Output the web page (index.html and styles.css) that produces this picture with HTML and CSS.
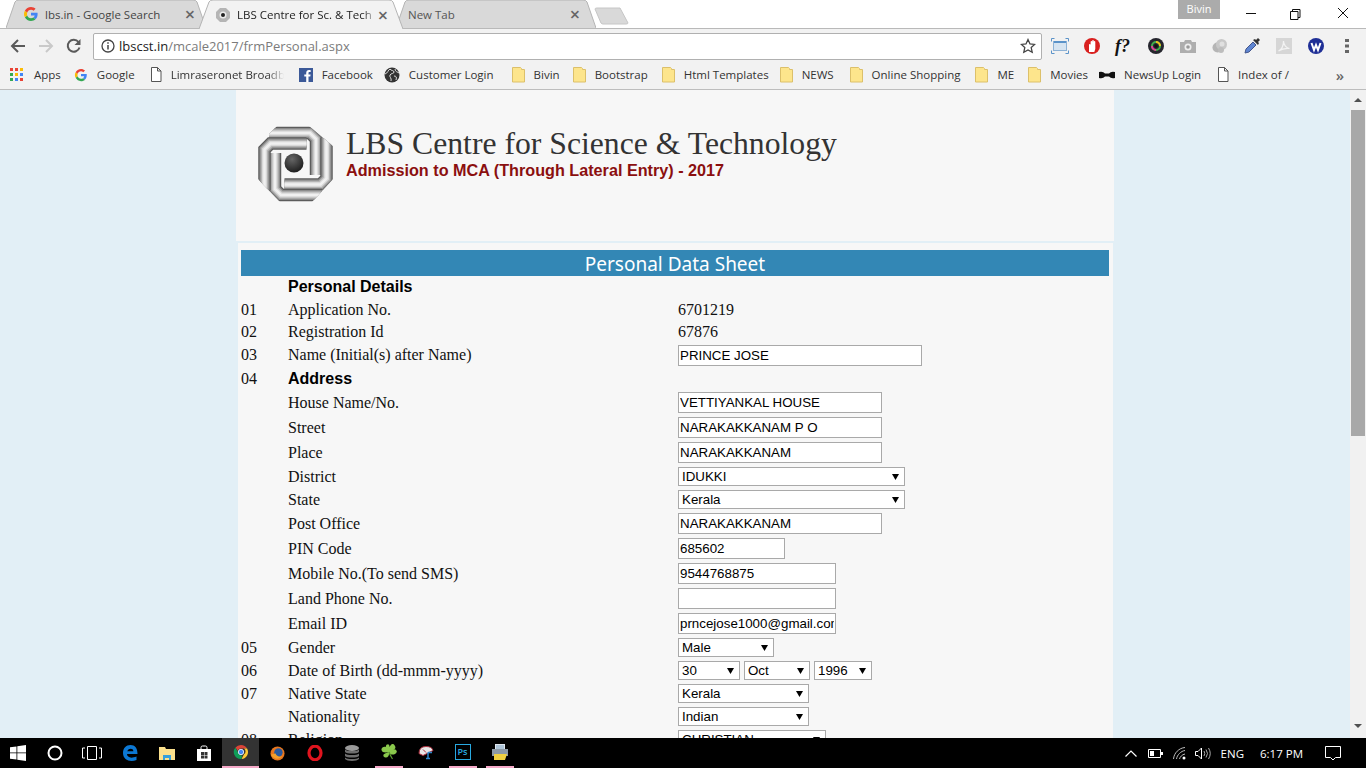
FILE: index.html
```html
<!DOCTYPE html>
<html lang="en">
<head>
  <meta charset="UTF-8">
  <title>LBS Centre for Sc. &amp; Tech</title>
  <link rel="stylesheet" href="styles.css">
</head>
<body>
  <svg class="defs" width="0" height="0">
    <symbol id="g-logo" viewBox="0 0 16 16">
      <path d="M14.6 8.2c0-.5 0-1-.1-1.400H8v2.700h3.700c-.2.900-.7 1.600-1.400 2.100l2.200 1.700c1.300-1.200 2.100-3 2.100-5.100z" fill="#4285f4"/>
      <path d="M8 15c1.900 0 3.400-.6 4.500-1.700l-2.200-1.700c-.6.400-1.400.7-2.300.7-1.800 0-3.300-1.200-3.800-2.800L1.900 11.200C3 13.500 5.300 15 8 15z" fill="#34a853"/>
      <path d="M4.200 9.500C4 9 4 8.500 4 8s.1-1 .2-1.500L1.900 4.800C1.300 5.700 1 6.800 1 8s.3 2.300.9 3.200z" fill="#fbbc05"/>
      <path d="M8 3.800c1 0 1.900.3 2.600 1l2-2C11.400 1.700 9.900 1 8 1 5.300 1 3 2.500 1.900 4.800l2.300 1.700C4.700 5 6.200 3.800 8 3.800z" fill="#ea4335"/>
    </symbol>
    <symbol id="doc" viewBox="0 0 12 15">
      <path d="M1.500.5h6l3.500 3.500v10.500h-9.500zM7.500.5v3.500h3.500" fill="#fff" stroke="#555"/>
    </symbol>
    <symbol id="folder" viewBox="0 0 13 16">
      <path d="M.5.500h8l1 1v1h3v12.500h-12z" fill="#fde58c" stroke="#dcc06a"/>
    </symbol>
    <symbol id="chrome" viewBox="0 0 16 16">
      <path d="M8 1a7 7 0 0 1 6.100 3.500H8a3.500 3.500 0 0 0-3.300 2.300L2.500 3.500A7 7 0 0 1 8 1z" fill="#db4437"/>
      <path d="M14.100 4.500A7 7 0 0 1 8.500 15l2.500-4.700a3.500 3.500 0 0 0 0-5.800z" fill="#fcc934"/>
      <path d="M2.500 3.500l3.100 6.300A3.500 3.500 0 0 0 9 11.400L8.500 15A7 7 0 0 1 2.500 3.500z" fill="#0f9d58"/>
      <circle cx="8" cy="8" r="2.700" fill="#4285f4" stroke="#fff" stroke-width=".8"/>
    </symbol>
    <g id="hook-shape" fill="none">
      <path id="hook-line" d="M12 7H53L59 13V49" stroke="#5c5c5c" stroke-width="12.500"/>
      <path d="M12 7H53L59 13V49" stroke="#8c8c8c" stroke-width="10"/>
      <path d="M12 7H53L59 13V49" stroke="#b4b4b4" stroke-width="7.500"/>
      <path d="M12 7H53L59 13V49" stroke="#d8d8d8" stroke-width="5"/>
      <path d="M12 7H53L59 13V49" stroke="#f0f0f0" stroke-width="2.500"/>
    </g>
  </svg>

  <div class="tabstrip">
    <div class="tab tab-first">
      <svg class="tab-shape" viewBox="0 0 200 28" preserveAspectRatio="none"><path d="M0 28L9 2Q10 0 13 0H187Q190 0 191 2L200 28" fill="#d9d9d9" stroke="#b4b4b4"/></svg>
      <svg class="tab-icon" width="16" height="16"><use href="#g-logo"/></svg>
      <span class="tab-title">lbs.in - Google Search</span>
      <span class="tab-close">×</span>
    </div>
    <div class="tab tab-active">
      <svg class="tab-shape" viewBox="0 0 204 29" preserveAspectRatio="none"><path d="M0 29L10 2Q11 0 14 0H190Q193 0 194 2L204 29" fill="#f2f2f2" stroke="#b4b4b4"/></svg>
      <svg class="tab-icon" width="16" height="16" viewBox="0 0 16 16"><path d="M5 1h6l4 4v6l-4 4H5l-4-4V5z" fill="#b5b5b5"/><circle cx="8" cy="8" r="3.500" fill="#ececec"/><circle cx="8" cy="8" r="2" fill="#222"/></svg>
      <span class="tab-title tab-title-fade">LBS Centre for Sc. &amp; Tech</span>
      <span class="tab-close">×</span>
    </div>
    <div class="tab tab-last">
      <svg class="tab-shape" viewBox="0 0 200 28" preserveAspectRatio="none"><path d="M0 28L9 2Q10 0 13 0H187Q190 0 191 2L200 28" fill="#d9d9d9" stroke="#b4b4b4"/></svg>
      <span class="tab-title tab-title-new">New Tab</span>
      <span class="tab-close">×</span>
    </div>
    <svg class="new-tab" width="36" height="18" viewBox="0 0 36 18"><path d="M1 2Q1 1 3 1H26L34 16Q34 17 32 17H9Q8 17 7 16z" fill="#d9d9d9" stroke="#c6c6c6"/></svg>
    <div class="spacer"></div>
    <div class="profile">Bivin</div>
    <div class="window-controls">
      <svg width="46" height="28"><path d="M18 13.500H28" stroke="#111"/></svg>
      <svg width="46" height="28"><path d="M16.500 11.500h7.500v8h-7.500zM18.500 11V9.500h7.500v8h-2" fill="none" stroke="#111"/></svg>
      <svg width="46" height="28"><path d="M18 8l10 10M28 8L18 18" stroke="#111" fill="none"/></svg>
    </div>
  </div>

  <div class="toolbar">
    <svg class="nav-icon" width="16" height="16" viewBox="0 0 16 16"><path d="M15 8H2M8 2L2 8l6 6" fill="none" stroke="#5a5a5a" stroke-width="2"/></svg>
    <svg class="nav-icon" width="16" height="16" viewBox="0 0 16 16"><path d="M1 8h13M8 2l6 6-6 6" fill="none" stroke="#c9c9c9" stroke-width="2"/></svg>
    <svg class="nav-icon" width="16" height="16" viewBox="0 0 16 16"><path d="M13.500 9.500A6 6 0 1 1 12.500 4" fill="none" stroke="#5a5a5a" stroke-width="2"/><path d="M14.500 1v6h-6z" fill="#5a5a5a"/></svg>
    <div class="omnibox">
      <svg width="14" height="14" viewBox="0 0 14 14"><circle cx="7" cy="7" r="6" fill="none" stroke="#444" stroke-width="1.300"/><path d="M7 6v4.500M7 3.300v1.500" stroke="#444" stroke-width="1.500"/></svg>
      <span class="url"><span class="url-host">lbscst.in</span>/mcale2017/frmPersonal.aspx</span>
      <svg class="star" width="16" height="16" viewBox="0 0 16 16"><path d="M8 1.500l2 4.400 4.700.5-3.500 3.200 1 4.700L8 11.900l-4.200 2.400 1-4.700L1.300 6.400 6 5.900z" fill="none" stroke="#444" stroke-width="1.300"/></svg>
    </div>
    <div class="extensions">
      <svg width="18" height="16" viewBox="0 0 18 16"><path d="M.5 3.500V.5h3M14.500 .5h3v3M17.500 12.500v3h-3M3.500 15.500h-3v-3" fill="none" stroke="#5b93c9"/><rect x="2.500" y="3.500" width="13" height="9" fill="#d6e4f1" stroke="#8db2d6"/><rect x="3" y="3" width="12" height="2" fill="#5b93c9"/></svg>
      <svg width="16" height="16" viewBox="0 0 16 16"><ellipse cx="8" cy="8" rx="8" ry="8" fill="#d9201f"/><path d="M5 14V7q0-1 .8-1t.8 1V4q0-1 .8-1t.8 1V3q0-1 .8-1t.8 1v1q0-1 .8-1t.7 1v7l-1 3z" fill="#fff"/></svg>
      <span class="ext-font">f?</span>
      <svg width="16" height="16" viewBox="0 0 16 16"><circle cx="8" cy="8" r="8" fill="#26262e"/><circle cx="8" cy="8" r="4" fill="none" stroke="#3fae4a" stroke-width="2"/><path d="M8 4a4 4 0 0 1 4 4" fill="none" stroke="#f0c020" stroke-width="2"/><path d="M4 8a4 4 0 0 0 4 4" fill="none" stroke="#e0409a" stroke-width="2"/><circle cx="8" cy="8" r="1.700" fill="#111"/></svg>
      <svg width="16" height="14" viewBox="0 0 16 14"><path d="M0 3h4l1-2h6l1 2h4v11H0z" fill="#aeaeae"/><circle cx="8" cy="8" r="3.500" fill="#eee"/><circle cx="8" cy="8" r="1.800" fill="#999"/></svg>
      <svg width="16" height="16" viewBox="0 0 16 16"><circle cx="5.500" cy="9.500" r="5" fill="#b5b5b5"/><circle cx="9.500" cy="6.500" r="5.500" fill="#c8c8c8"/><circle cx="10" cy="6" r="2.500" fill="#e0e0e0"/><circle cx="9" cy="12" r="3" fill="#bdbdbd"/></svg>
      <svg width="18" height="18" viewBox="0 0 18 18"><path d="M2 16l1-4 7-7 3 3-7 7z" fill="#5f86d2" stroke="#44568c"/><path d="M10 3l5 5 1-2-1-1 2-2-2-2-2 2-1-1z" fill="#333"/></svg>
      <svg width="16" height="16" viewBox="0 0 16 16"><rect width="16" height="16" fill="#d6d6d6"/><path d="M2.500 13c3-1.500 5-5 5-10 0 4 3 7 6 7.500-3-.3-8 .5-11 2.500z" fill="none" stroke="#f3f3f3" stroke-width="1.200"/></svg>
      <svg width="16" height="16" viewBox="0 0 16 16"><circle cx="8" cy="8" r="8" fill="#1f2f96"/><path d="M3.500 5l2.500 7L8 7l2 5 2.500-7" fill="none" stroke="#fff" stroke-width="2"/></svg>
    </div>
    <svg class="menu-dots" width="4" height="14"><path d="M0 0h4v3H0zM0 5.500h4v3H0zM0 11h4v3H0z" fill="#666"/></svg>
  </div>

  <div class="bookmarks">
    <a class="bm bm-apps">
      <svg width="14" height="14" viewBox="0 0 14 14"><path d="M0 0h3v3H0z" fill="#ea4335"/><path d="M5 0h3v3H5z" fill="#ea4335"/><path d="M10 0h3v3h-3z" fill="#fbbc05"/><path d="M0 5h3v3H0z" fill="#34a853"/><path d="M5 5h3v3H5z" fill="#fbbc05"/><path d="M10 5h3v3h-3z" fill="#4285f4"/><path d="M0 10h3v3H0z" fill="#34a853"/><path d="M5 10h3v3H5z" fill="#4285f4"/><path d="M10 10h3v3h-3z" fill="#ea4335"/></svg>
      <span>Apps</span>
    </a>
    <a class="bm"><svg width="14" height="14"><use href="#g-logo"/></svg><span>Google</span></a>
    <a class="bm"><svg width="12" height="15"><use href="#doc"/></svg><span class="bm-clip">Limraseronet Broadb</span></a>
    <a class="bm m11">
      <svg width="14" height="14" viewBox="0 0 14 14"><rect width="14" height="14" fill="#3b5998"/><path d="M9.500 14V8.500h1.800l.3-2.100H9.500V5.100c0-.6.200-1 1-1h1.200V2.200c-.2 0-.900-.1-1.700-.1-1.700 0-2.800 1-2.800 2.900v1.400H5.300v2.100h1.900V14z" fill="#fff"/></svg>
      <span>Facebook</span>
    </a>
    <a class="bm m18">
      <svg width="16" height="16" viewBox="0 0 16 16"><circle cx="8" cy="8" r="7.500" fill="#333"/><path d="M1 7c3-1 3-4 5-5 1 2 4 1 4 3s-3 1-4 3 2 3 1 6M11 2c0 3 3 3 4 4M10 9c2 0 3 1 2 4" fill="none" stroke="#ddd"/></svg>
      <span>Customer Login</span>
    </a>
    <a class="bm m13"><svg width="13" height="16"><use href="#folder"/></svg><span>Bivin</span></a>
    <a class="bm m14"><svg width="13" height="16"><use href="#folder"/></svg><span>Bootstrap</span></a>
    <a class="bm m11"><svg width="13" height="16"><use href="#folder"/></svg><span>Html Templates</span></a>
    <a class="bm m16"><svg width="13" height="16"><use href="#folder"/></svg><span>NEWS</span></a>
    <a class="bm"><svg width="13" height="16"><use href="#folder"/></svg><span>Online Shopping</span></a>
    <a class="bm m14"><svg width="13" height="16"><use href="#folder"/></svg><span>ME</span></a>
    <a class="bm m11"><svg width="13" height="16"><use href="#folder"/></svg><span>Movies</span></a>
    <a class="bm m16">
      <svg width="16" height="8" viewBox="0 0 16 8"><path d="M0 1q4-1 6 1.500h4Q12 0 16 1v6q-4 1-6-1.500H6Q4 8 0 7z" fill="#111"/></svg>
      <span>NewsUp Login</span>
    </a>
    <a class="bm"><svg width="12" height="15"><use href="#doc"/></svg><span>Index of /</span></a>
    <span class="bm-more">»</span>
  </div>

  <div class="viewport">
    <main class="page">
      <header class="site-header">
        <svg class="site-logo" width="77" height="76" viewBox="0 0 77 76">
          <defs>
            <radialGradient id="dot" cx=".4" cy=".3" r=".8"><stop offset="0" stop-color="#666"/><stop offset="1" stop-color="#151515"/></radialGradient>
            <clipPath id="octagon"><path d="M20 0H52L77 21V52L55 76H23L0 52V21z"/></clipPath>
          </defs>
          <g clip-path="url(#octagon)">
            <use href="#hook-shape"/>
            <use href="#hook-shape" transform="rotate(90 38.500 38)"/>
            <use href="#hook-shape" transform="rotate(180 38.500 38)"/>
            <use href="#hook-shape" transform="rotate(270 38.500 38)"/>
          </g>
          <circle cx="37" cy="37" r="9.500" fill="url(#dot)"/>
        </svg>
        <div class="site-titles">
          <h1 class="site-name">LBS Centre for Science &amp; Technology</h1>
          <h2 class="site-sub">Admission to MCA (Through Lateral Entry) - 2017</h2>
        </div>
      </header>

      <form class="sheet">
        <div class="sheet-title">Personal Data Sheet</div>

        <div class="row h22"><span class="no"></span><span class="label head">Personal Details</span></div>
        <div class="row h23"><span class="no">01</span><span class="label">Application No.</span><span class="value">6701219</span></div>
        <div class="row h22"><span class="no">02</span><span class="label">Registration Id</span><span class="value">67876</span></div>
        <div class="row h24"><span class="no">03</span><span class="label">Name (Initial(s) after Name)</span><input class="w-name" value="PRINCE JOSE"></div>
        <div class="row h23"><span class="no">04</span><span class="label head">Address</span></div>
        <div class="row h25"><span class="no"></span><span class="label">House Name/No.</span><input class="w-addr" value="VETTIYANKAL HOUSE"></div>
        <div class="row h25"><span class="no"></span><span class="label">Street</span><input class="w-addr" value="NARAKAKKANAM P O"></div>
        <div class="row h25"><span class="no"></span><span class="label">Place</span><input class="w-addr" value="NARAKAKKANAM"></div>
        <div class="row h23"><span class="no"></span><span class="label">District</span><select class="w-wide"><option>IDUKKI</option></select></div>
        <div class="row h23"><span class="no"></span><span class="label">State</span><select class="w-wide"><option>Kerala</option></select></div>
        <div class="row h25"><span class="no"></span><span class="label">Post Office</span><input class="w-addr" value="NARAKAKKANAM"></div>
        <div class="row h25"><span class="no"></span><span class="label">PIN Code</span><input class="w-pin" value="685602"></div>
        <div class="row h25"><span class="no"></span><span class="label">Mobile No.(To send SMS)</span><input class="w-phone" value="9544768875"></div>
        <div class="row h25"><span class="no"></span><span class="label">Land Phone No.</span><input class="w-phone" value=""></div>
        <div class="row h25"><span class="no"></span><span class="label">Email ID</span><input class="w-phone" value="prncejose1000@gmail.com"></div>
        <div class="row h23"><span class="no">05</span><span class="label">Gender</span><select class="w-gender"><option>Male</option></select></div>
        <div class="row h23"><span class="no">06</span><span class="label">Date of Birth (dd-mmm-yyyy)</span>
          <div class="dob">
            <select class="w-day"><option>30</option></select>
            <select class="w-month"><option>Oct</option></select>
            <select class="w-year"><option>1996</option></select>
          </div>
        </div>
        <div class="row h23"><span class="no">07</span><span class="label">Native State</span><select class="w-state"><option>Kerala</option></select></div>
        <div class="row h23"><span class="no"></span><span class="label">Nationality</span><select class="w-state"><option>Indian</option></select></div>
        <div class="row h23"><span class="no">08</span><span class="label">Religion</span><select class="w-religion"><option>CHRISTIAN</option></select></div>
      </form>
    </main>
    <div class="scrollbar">
      <svg width="16" height="20"><path d="M4 12l4-4 4 4z" fill="#505050"/></svg>
      <div class="scroll-thumb"></div>
    </div>
    <svg class="scroll-down" width="16" height="16"><path d="M4 4l4 4 4-4z" fill="#505050"/></svg>
  </div>

  <footer class="taskbar">
    <div class="task task-start"><svg width="16" height="16" viewBox="0 0 16 16"><path d="M0 2.300L6.500 1.400V7.500H0zM7.300 1.300L16 0V7.500H7.300zM0 8.300H6.500V14.500L0 13.700zM7.300 8.300H16V16L7.300 14.700z" fill="#fff"/></svg></div>
    <div class="task"><svg width="16" height="16"><circle cx="8" cy="8" r="6.500" fill="none" stroke="#fff" stroke-width="2"/></svg></div>
    <div class="task task-view"><svg width="20" height="14"><path d="M5.500 .5h9v13h-9zM3 2H.5v10H3M17 2h2.500v10H17" fill="none" stroke="#fff"/></svg></div>
    <div class="task"><svg width="16" height="16" viewBox="0 0 16 16"><path d="M1 8C1 3 4 0 8.500 0 13 0 15.500 3 15.500 9H5C5 12 8.500 14 14.500 11.500V15C8 17.500 1 15 1 8zM5.200 6.300h6.200C11.300 3 6.500 3 5.200 6.300z" fill="#0c78d4"/></svg></div>
    <div class="task"><svg width="16" height="14" viewBox="0 0 16 14"><path d="M0 1h6l1 2h9v11H0z" fill="#fbe08c"/><path d="M4 9h8v5H10v-2H6v2H4z" fill="#35a0dc"/></svg></div>
    <div class="task"><svg width="14" height="16" viewBox="0 0 14 16"><path d="M0 4h14v12H0z" fill="#fff"/><path d="M4 4V2.500Q4 1 5.500 1h3Q10 1 10 2.500V4" fill="none" stroke="#fff"/><path d="M4 7h3v3H4zM7.500 7h3v3h-3zM4 10.500h3v3H4zM7.500 10.500h3v3h-3z" fill="#333"/></svg></div>
    <div class="task task-on"><svg width="16" height="16"><use href="#chrome"/></svg></div>
    <div class="task"><svg width="15" height="15" viewBox="0 0 16 16"><circle cx="8" cy="8" r="7.500" fill="#e8771e"/><circle cx="9" cy="7" r="4.500" fill="#2a5a9e"/><path d="M1 9c2 5 9 6 12 2-3 1-6 0-7-3z" fill="#f3a02b"/></svg></div>
    <div class="task"><svg width="16" height="16"><ellipse cx="8" cy="8" rx="6" ry="6.800" fill="none" stroke="#e0141e" stroke-width="3.200"/></svg></div>
    <div class="task"><svg width="14" height="16" viewBox="0 0 14 16"><ellipse cx="7" cy="3" rx="7" ry="3" fill="#9a9a9a"/><path d="M0 4.500c2 2 12 2 14 0V7c-2 2-12 2-14 0zM0 8.500c2 2 12 2 14 0V11c-2 2-12 2-14 0zM0 12.500c2 2 12 2 14 0V14c-2 2.600-12 2.600-14 0z" fill="#6f6f6f"/></svg></div>
    <div class="task task-run"><svg width="16" height="16" viewBox="0 0 16 16"><path d="M8 8C4 9 1 8.500 .5 6S3 2 5 3Q4.500 .5 7 .3T8 8zM8 8Q7.500 3 10 .8T14 2 11.500 5.500Q15 4.500 15.700 7T13 10.500Q8.500 11 8 8zM8 8C8.500 11 7 14 4.500 13.500S1.500 10.500 4 9.500Q6 8.500 8 8z" fill="#8ac84c"/><path d="M8 8q1.500 4 3.500 7" fill="none" stroke="#5e9a30" stroke-width="1.200"/></svg></div>
    <div class="task"><svg width="16" height="16" viewBox="0 0 16 15"><path d="M1 8Q1 1 8 1q6 0 7 4L5 10z" fill="#e8e8e8" stroke="#b03040"/><path d="M5 4l3 3" stroke="#b03040"/><path d="M10 7v6M8 13h4M10 7h4" stroke="#2a86d0" stroke-width="1.500"/></svg></div>
    <div class="task task-run"><div class="ps-icon">Ps</div></div>
    <div class="task task-run"><svg width="16" height="16" viewBox="0 0 16 16"><path d="M3 0h10v6H3z" fill="#dfe6ee"/><path d="M0 5h16v7H0z" fill="#8d9aa6"/><path d="M2 10h13l-2 6H2z" fill="#f0d040"/><path d="M4 2h8M4 4h8" stroke="#7aa0c0"/></svg></div>
    <div class="spacer"></div>
    <svg class="tray-chevron" width="12" height="7"><path d="M.5 6.500L6 1l5.500 5.500" fill="none" stroke="#fff" stroke-width="1.200"/></svg>
    <svg class="tray-battery" width="15" height="9"><path d="M.5 .5h12v8H.5z" fill="none" stroke="#fff"/><path d="M2 2h4v5H2z" fill="#fff"/><path d="M13 3h2v3h-2z" fill="#fff"/></svg>
    <svg class="tray-wifi" width="13" height="13" viewBox="0 0 13 13"><path d="M.5 12C1 6 6 1 12 .5M3.500 12C4 8 8 4 12 3.500M6.500 12C7 10 9 7.500 12 7" fill="none" stroke="#bbb"/><circle cx="11" cy="11" r="1.500" fill="#fff"/></svg>
    <svg class="tray-volume" width="16" height="13" viewBox="0 0 16 13"><path d="M.5 4.500h2.500L6.500 1v11L3 8.500H.5z" fill="none" stroke="#fff"/><path d="M9 4q1.500 2.500 0 5M11 2.500q3 4 0 8M13.500 1q3.500 5.500 0 11" fill="none" stroke="#aaa"/></svg>
    <span class="tray-lang">ENG</span>
    <span class="tray-clock">6:17 PM</span>
    <svg class="tray-notify" width="16" height="15" viewBox="0 0 16 15"><path d="M.5 .5h15v11h-5L8 14l-2.500-2.500h-5z" fill="none" stroke="#fff"/></svg>
  </footer>
</body>
</html>
```

FILE: styles.css
```css
* {
  box-sizing: border-box;
}

body {
  margin: 0;
  height: 768px;
  overflow: hidden;
  display: flex;
  flex-direction: column;
  font-family: "Open Sans", "Liberation Sans", sans-serif;
  background-color: #fff;
}

.defs {
  position: absolute;
}

.spacer {
  flex: 1;
}

/* tab strip */
.tabstrip {
  display: flex;
  height: 29px;
  flex-shrink: 0;
  background-color: #fff;
  border-bottom: 1px solid #b9b9b9;
}

.tab {
  position: relative;
  display: flex;
  align-items: center;
  height: 28px;
  font-size: 11.5px;
  color: #444;
}

.tab-first {
  width: 200px;
  margin-left: 6px;
  padding: 0 10px 0 17px;
}

.tab-active {
  width: 204px;
  height: 29px;
  margin-left: -7px;
  padding: 0 14px 0 16px;
  color: #222;
  z-index: 1;
}

.tab-last {
  width: 200px;
  margin-left: -7px;
  padding: 0 15px 0 12px;
}

.tab-shape {
  position: absolute;
  top: 0;
  left: 0;
  width: 100%;
  height: 28px;
}

.tab-active .tab-shape {
  height: 29px;
}

.tab-icon {
  position: relative;
  flex-shrink: 0;
  margin-right: 6px;
}

.tab-title {
  position: relative;
  flex: 1;
  overflow: hidden;
  white-space: nowrap;
}

.tab-title-fade {
  -webkit-mask-image: linear-gradient(to left, transparent, #000 14px);
  mask-image: linear-gradient(to left, transparent, #000 14px);
}

.tab-title-new {
  color: #555;
}

.tab-close {
  position: relative;
  width: 12px;
  font-size: 18px;
  font-weight: 600;
  line-height: 18px;
  text-align: center;
  color: #666;
}

.new-tab {
  margin: 7px 0 0 -2px;
}

.profile {
  width: 42px;
  height: 19px;
  background-color: #ababab;
  color: #fff;
  font-size: 11px;
  line-height: 18px;
  text-align: center;
}

.window-controls {
  display: flex;
  margin-left: 8px;
}

.window-controls svg {
  width: 46px;
  height: 28px;
}

/* toolbar */
.toolbar {
  display: flex;
  align-items: center;
  height: 34px;
  flex-shrink: 0;
  padding-left: 10px;
  background-color: #f2f2f2;
}

.nav-icon {
  margin-right: 12px;
}

.omnibox {
  display: flex;
  align-items: center;
  width: 949px;
  height: 27px;
  margin-left: -1px;
  padding: 0 5px 0 7px;
  background-color: #fff;
  border: 1px solid #b0b0b0;
  border-radius: 2px;
}

.url {
  flex: 1;
  margin-left: 4px;
  font-size: 13px;
  color: #7b7b7b;
}

.url-host {
  color: #222;
}

.extensions {
  display: flex;
  align-items: center;
  margin-left: 9px;
}

.extensions > * {
  width: 18px;
  margin-right: 14px;
}

.ext-font {
  font-family: "Liberation Serif", serif;
  font-size: 18px;
  font-style: italic;
  font-weight: bold;
  color: #111;
}

.menu-dots {
  margin-left: 6px;
}

/* bookmarks */
.bookmarks {
  display: flex;
  align-items: center;
  height: 27px;
  flex-shrink: 0;
  padding: 0 0 3px 10px;
  background-color: #f2f2f2;
  border-bottom: 1px solid #bdbdbd;
  font-size: 11.5px;
  color: #333;
}

.bm {
  display: flex;
  align-items: center;
  gap: 9px;
  margin-right: 15px;
  white-space: nowrap;
}

.bm-apps {
  gap: 10px;
  margin-right: 13px;
}

.bm.m11 { margin-right: 11px; }
.bm.m13 { margin-right: 13px; }
.bm.m14 { margin-right: 14px; }
.bm.m16 { margin-right: 16px; }
.bm.m18 { margin-right: 18px; }

.bm-clip {
  width: 113px;
  overflow: hidden;
  -webkit-mask-image: linear-gradient(to left, transparent, #000 16px);
  mask-image: linear-gradient(to left, transparent, #000 16px);
}

.bm-more {
  margin-left: auto;
  margin-right: 22px;
  font-size: 15px;
  font-weight: 600;
  color: #666;
}

/* page */
.viewport {
  position: relative;
  display: flex;
  flex: 1;
  min-height: 0;
  background-color: #e2eff6;
}

.page {
  flex: 1;
  min-width: 0;
  overflow: hidden;
}

.site-header {
  display: flex;
  align-items: flex-start;
  width: 878px;
  height: 151px;
  margin-left: 236px;
  padding: 36px 0 0 21px;
  background-color: #f7f7f7;
}

.site-logo {
  filter: blur(.5px);
}

.site-titles {
  margin-left: 12px;
}

.site-name {
  margin: 0;
  font-family: "Liberation Serif", serif;
  font-size: 31.7px;
  font-weight: normal;
  line-height: 36px;
  color: #333;
}

.site-sub {
  margin: -2px 0 0;
  font-family: "Liberation Sans", sans-serif;
  font-size: 16.2px;
  font-weight: bold;
  line-height: 20px;
  color: #8b0f0f;
}

.sheet {
  width: 875px;
  margin: 2px 0 0 238px;
  padding: 7px 0 0 3px;
  background-color: #f7f7f7;
  font-family: "Liberation Serif", serif;
  font-size: 16px;
  color: #111;
}

.sheet-title {
  width: 868px;
  height: 26px;
  background-color: #3387b5;
  color: #fff;
  font-family: "Noto Sans", sans-serif;
  font-size: 19px;
  line-height: 28px;
  text-align: center;
}

.row {
  display: flex;
  align-items: center;
}

.h22 { height: 22px; }
.h23 { height: 23px; }
.h24 { height: 24px; }
.h25 { height: 25px; }

.no {
  width: 47px;
}

.label {
  width: 390px;
}

.head {
  font-family: "Liberation Sans", sans-serif;
  font-size: 16px;
  font-weight: bold;
  color: #000;
}

input,
select {
  height: 21px;
  padding: 1px;
  background-color: #fff;
  border: 1px solid #a9a9a9;
  border-radius: 0;
  font-family: "Liberation Sans", sans-serif;
  font-size: 13.333px;
  color: #000;
}

select {
  height: 19px;
  padding: 0 0 0 3px;
  appearance: none;
  background-image: url("data:image/svg+xml,%3Csvg xmlns='http://www.w3.org/2000/svg' width='7' height='6'%3E%3Cpath d='M0 0h7L3.500 6z' fill='%23000'/%3E%3C/svg%3E");
  background-repeat: no-repeat;
  background-position: right 5px center;
}

.dob {
  display: flex;
  gap: 4px;
}

.w-name { width: 244px; }
.w-addr { width: 204px; }
.w-pin { width: 107px; }
.w-phone { width: 158px; }
.w-wide { width: 227px; }
.w-gender { width: 96px; }
.w-day { width: 62px; }
.w-month { width: 66px; }
.w-year { width: 58px; }
.w-state { width: 131px; }
.w-religion { width: 148px; }

/* scrollbar */
.scrollbar {
  display: flex;
  flex-direction: column;
  width: 16px;
  flex-shrink: 0;
  background-color: #f1f1f1;
}

.scroll-thumb {
  width: 14px;
  height: 326px;
  margin-left: 1px;
  background-color: #a8a8a8;
}

.scroll-down {
  position: absolute;
  right: 0;
  bottom: 2px;
}

/* windows taskbar */
.taskbar {
  display: flex;
  align-items: center;
  height: 30px;
  flex-shrink: 0;
  background-color: #000;
  color: #fff;
  font-size: 11.5px;
}

.task {
  display: flex;
  align-items: center;
  justify-content: center;
  width: 37px;
  height: 30px;
}

.task-start {
  width: 36px;
}

.task-view {
  margin-right: 1px;
}

.task-on {
  background-color: #333;
  border-bottom: 2px solid #f5a9c8;
}

.task-run {
  border-bottom: 2px solid transparent;
  background: linear-gradient(#f5a9c8, #f5a9c8) no-repeat center bottom / 28px 2px;
  background-origin: border-box;
  background-clip: border-box;
}

.ps-icon {
  width: 16px;
  height: 16px;
  border: 1px solid #29a9e0;
  background-color: #000;
  color: #29a9e0;
  font-size: 9px;
  font-weight: 600;
  line-height: 14px;
  text-align: center;
}

.tray-chevron {
  margin-right: 11px;
}

.tray-battery {
  margin-right: 10px;
}

.tray-wifi {
  margin-right: 9px;
}

.tray-volume {
  margin-right: 10px;
}

.tray-lang {
  margin-right: 16px;
}

.tray-clock {
  margin-right: 22px;
}

.tray-notify {
  margin-right: 25px;
}
```
